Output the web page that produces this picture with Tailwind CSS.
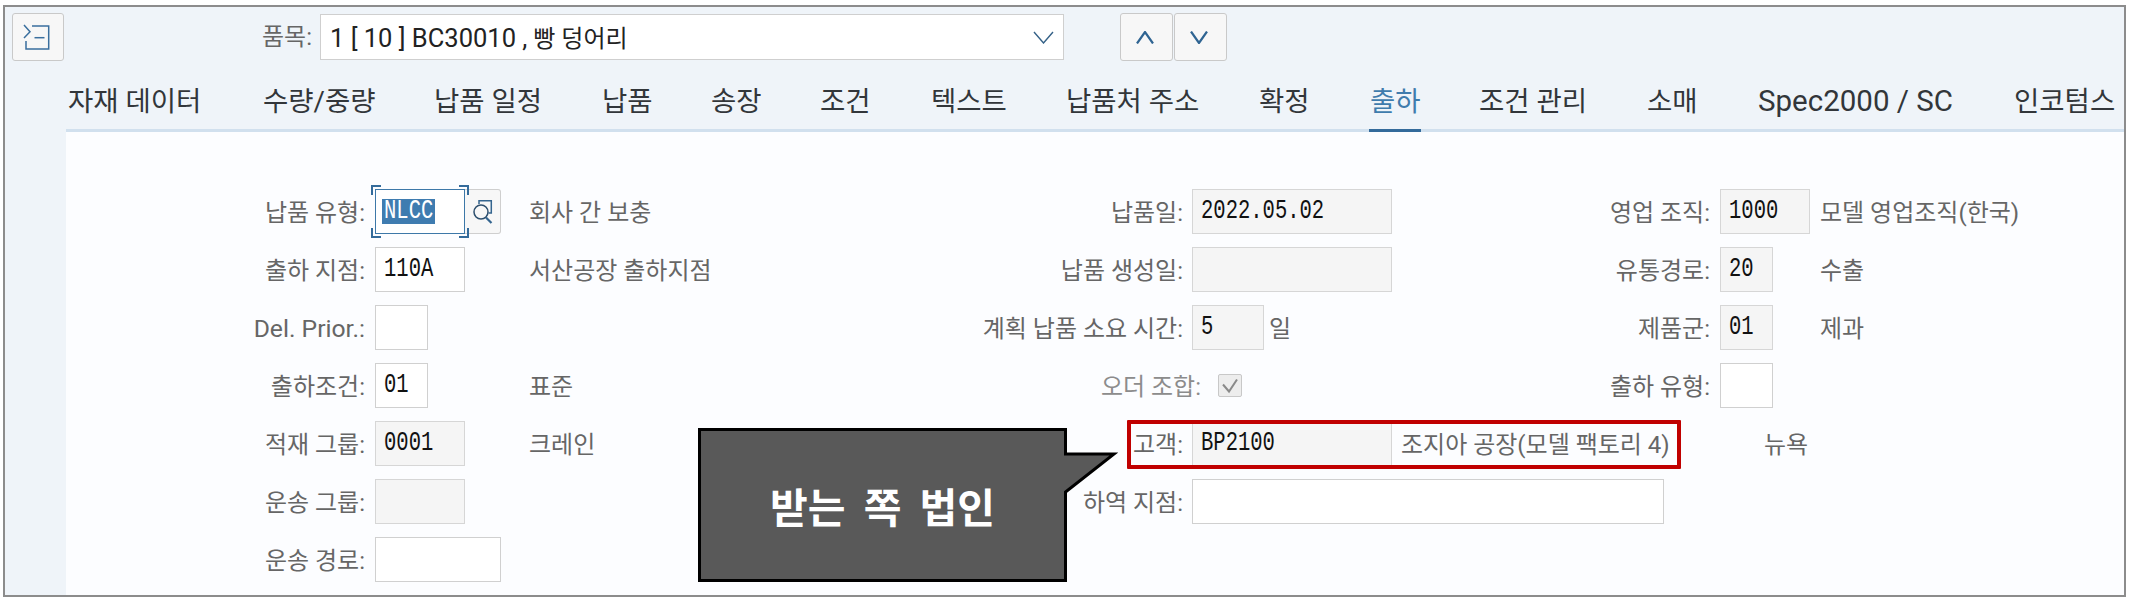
<!DOCTYPE html>
<html lang="ko">
<head>
    <meta charset="UTF-8">
    <script src="https://cdn.jsdelivr.net/npm/@tailwindcss/browser@4"></script>
    <title>출하</title>
</head>
<body class="bg-white font-['Roboto','Noto_Sans_CJK_KR',sans-serif] overflow-hidden">
<div class="pl-[3px] pt-[5px]">
    <div class="relative w-[2123px] h-[592px] border-2 border-[#8c8c8c] bg-[#eff4f9] flex flex-col">

        <!-- top bar -->
        <div class="flex h-[54px] shrink-0 items-start pt-[6px] pl-[7px]">
            <div class="w-[52px] h-[48px] rounded-[3px] border border-[#c9c9c9] bg-[#f7f7f7]">
                <svg viewBox="13 14 50 46" class="w-[50px] h-[46px]" fill="none" stroke="#3a6f9e" stroke-width="1.5">
                    <path d="M24 25 30 31.7 24 38"/>
                    <path d="M32 26H48.7V49H26V41"/>
                    <path d="M34.5 37.7H44.5"/>
                </svg>
            </div>
            <div class="ml-[198px] w-[49px] h-[46px] pt-[2px] flex items-center whitespace-nowrap text-[24px] text-[#666]">품목:</div>
            <div class="ml-[9px] mt-[1px] w-[744px] h-[46px] flex items-center justify-between border border-[#cfcfcf] bg-white pl-[9px] pr-[9px]">
                <span class="pt-[2px] text-[24px] text-[#222] whitespace-nowrap"><span class="text-[25.5px]">1 [ 10 ] BC30010 ,</span> 빵 덩어리</span>
                <svg width="21" height="13" viewBox="0 0 21 13" fill="none" stroke="#346187" stroke-width="1.4"><path d="M1 1 10.5 12 20 1"/></svg>
            </div>
            <div class="ml-[56px] w-[53px] h-[48px] flex items-center justify-center rounded-[3px] border border-[#c9c9c9] bg-[#f7f7f7]">
                <svg class="mr-[3px]" width="18" height="13" viewBox="0 0 18 13" fill="none" stroke="#2f6492" stroke-width="2.2"><path d="M1 12.5 9 1 17 12.5"/></svg>
            </div>
            <div class="ml-[1px] w-[53px] h-[48px] flex items-center justify-center rounded-[3px] border border-[#c9c9c9] bg-[#f7f7f7]">
                <svg class="mr-[4px]" width="18" height="13" viewBox="0 0 18 13" fill="none" stroke="#2f6492" stroke-width="2.2"><path d="M1 .5 9 12 17 .5"/></svg>
            </div>
        </div>

        <!-- tabs -->
        <div class="ml-[61px] h-[71px] shrink-0 flex items-stretch gap-[62px] pl-[2px] border-b-[3px] border-[#d1e0ee] text-[27.5px] text-[#32363a] whitespace-nowrap">
            <div class="w-[133px] pt-[20px]">자재 데이터</div>
            <div class="w-[109px] pt-[20px]">수량/중량</div>
            <div class="w-[106px] pt-[20px]">납품 일정</div>
            <div class="w-[47px] pt-[20px]">납품</div>
            <div class="w-[47px] pt-[20px]">송장</div>
            <div class="w-[49px] pt-[20px]">조건</div>
            <div class="w-[73px] pt-[20px]">텍스트</div>
            <div class="w-[131px] pt-[20px]">납품처 주소</div>
            <div class="w-[49px] pt-[20px]">확정</div>
            <div class="w-[52px] -ml-[1px] -mr-[4px] pl-[1px] pt-[20px] h-[71px] border-b-[3px] border-[#346b9b] text-[#3f7cad]">출하</div>
            <div class="w-[106px] pt-[20px]">조건 관리</div>
            <div class="w-[49px] pt-[20px]">소매</div>
            <div class="w-[194px] pt-[20px] text-[29.5px] leading-[40px]">Spec2000 / SC</div>
            <div class="pt-[20px]">인코텀스</div>
        </div>

        <!-- form -->
        <div class="ml-[61px] flex-1 bg-[#fcfdff] pt-[57px] flex flex-col gap-[13px] text-[24px] text-[#666] whitespace-nowrap">

            <div class="flex h-[45px] items-center">
                <div class="w-[734px] flex items-center">
                    <div class="w-[299px] pt-[3px] text-right">납품 유형:</div>
                    <div class="ml-[10px] w-[154px] flex">
                        <div class="relative w-[90px] h-[45px] flex items-center border border-[#3d78a8] bg-white pl-[6px]">
                            <span class="h-[25px] w-[53px] flex items-center bg-[#3f7cb0] pl-[2px] text-white"><span class="inline-block origin-left scale-x-[.76] font-['Liberation_Mono',monospace] text-[27px]">NLCC</span></span>
                            <span class="absolute -left-[5px] -top-[5px] w-[10px] h-[10px] border-l-2 border-t-2 border-[#346b9b]"></span>
                            <span class="absolute -right-[5px] -top-[5px] w-[10px] h-[10px] border-r-2 border-t-2 border-[#346b9b]"></span>
                            <span class="absolute -left-[5px] -bottom-[5px] w-[10px] h-[10px] border-l-2 border-b-2 border-[#346b9b]"></span>
                            <span class="absolute -right-[5px] -bottom-[5px] w-[10px] h-[10px] border-r-2 border-b-2 border-[#346b9b]"></span>
                        </div>
                        <div class="w-[36px] h-[45px] flex items-center justify-center rounded-r-[3px] border border-l-0 border-[#cfcfcf] bg-[#f7f7f7]">
                            <svg width="20" height="24" viewBox="0 0 20 24" fill="none" stroke="#34658f" stroke-width="1.5">
                                <path d="M6 4V.8H18.3V13H15.5"/>
                                <circle cx="8" cy="12" r="7" stroke="#2d4f6e"/>
                                <path d="M13 17.5 18.5 23" stroke-width="2.2"/>
                            </svg>
                        </div>
                    </div>
                    <div class="pt-[3px]">회사 간 보충</div>
                </div>
                <div class="w-[700px] flex items-center">
                    <div class="w-[383px] pt-[3px] text-right">납품일:</div>
                    <div class="ml-[9px] w-[200px] h-[45px] flex items-center border border-[#d6d6d6] bg-[#f5f5f5] pl-[8px] text-[#111]"><span class="inline-block origin-left scale-x-[.76] font-['Liberation_Mono',monospace] text-[27px]">2022.05.02</span></div>
                </div>
                <div class="flex items-center">
                    <div class="w-[210px] pt-[3px] text-right">영업 조직:</div>
                    <div class="ml-[10px] w-[100px]"><div class="w-[90px] h-[45px] flex items-center border border-[#d6d6d6] bg-[#f5f5f5] pl-[8px] text-[#111]"><span class="inline-block origin-left scale-x-[.76] font-['Liberation_Mono',monospace] text-[27px]">1000</span></div></div>
                    <div class="pt-[3px]">모델 영업조직(한국)</div>
                </div>
            </div>

            <div class="flex h-[45px] items-center">
                <div class="w-[734px] flex items-center">
                    <div class="w-[299px] pt-[3px] text-right">출하 지점:</div>
                    <div class="ml-[10px] w-[154px]"><div class="w-[90px] h-[45px] flex items-center border border-[#d0d0d0] bg-white pl-[8px] text-[#111]"><span class="inline-block origin-left scale-x-[.76] font-['Liberation_Mono',monospace] text-[27px]">110A</span></div></div>
                    <div class="pt-[3px]">서산공장 출하지점</div>
                </div>
                <div class="w-[700px] flex items-center">
                    <div class="w-[383px] pt-[3px] text-right">납품 생성일:</div>
                    <div class="ml-[9px] w-[200px] h-[45px] border border-[#d6d6d6] bg-[#f5f5f5]"></div>
                </div>
                <div class="flex items-center">
                    <div class="w-[210px] pt-[3px] text-right">유통경로:</div>
                    <div class="ml-[10px] w-[100px]"><div class="w-[53px] h-[45px] flex items-center border border-[#d6d6d6] bg-[#f5f5f5] pl-[8px] text-[#111]"><span class="inline-block origin-left scale-x-[.76] font-['Liberation_Mono',monospace] text-[27px]">20</span></div></div>
                    <div class="pt-[3px]">수출</div>
                </div>
            </div>

            <div class="flex h-[45px] items-center">
                <div class="w-[734px] flex items-center">
                    <div class="w-[299px] pt-[3px] text-right text-[24.7px]">Del. Prior.:</div>
                    <div class="ml-[10px] w-[53px] h-[45px] border border-[#d0d0d0] bg-white"></div>
                </div>
                <div class="w-[700px] flex items-center">
                    <div class="w-[383px] pt-[3px] text-right">계획 납품 소요 시간:</div>
                    <div class="ml-[9px] w-[72px] h-[45px] flex items-center border border-[#d6d6d6] bg-[#f5f5f5] pl-[8px] text-[#111]"><span class="inline-block origin-left scale-x-[.76] font-['Liberation_Mono',monospace] text-[27px]">5</span></div>
                    <div class="ml-[5px] pt-[3px]">일</div>
                </div>
                <div class="flex items-center">
                    <div class="w-[210px] pt-[3px] text-right">제품군:</div>
                    <div class="ml-[10px] w-[100px]"><div class="w-[53px] h-[45px] flex items-center border border-[#d6d6d6] bg-[#f5f5f5] pl-[8px] text-[#111]"><span class="inline-block origin-left scale-x-[.76] font-['Liberation_Mono',monospace] text-[27px]">01</span></div></div>
                    <div class="pt-[3px]">제과</div>
                </div>
            </div>

            <div class="flex h-[45px] items-center">
                <div class="w-[734px] flex items-center">
                    <div class="w-[299px] pt-[3px] text-right">출하조건:</div>
                    <div class="ml-[10px] w-[154px]"><div class="w-[53px] h-[45px] flex items-center border border-[#d0d0d0] bg-white pl-[8px] text-[#111]"><span class="inline-block origin-left scale-x-[.76] font-['Liberation_Mono',monospace] text-[27px]">01</span></div></div>
                    <div class="pt-[3px]">표준</div>
                </div>
                <div class="w-[700px] flex items-center">
                    <div class="w-[401px] pt-[3px] text-right text-[#8c8c8c]">오더 조합:</div>
                    <div class="ml-[17px] w-[24px] h-[23px] rounded-[2px] border border-[#c8c8c8] bg-[#ededed]">
                        <svg width="22" height="21" viewBox="0 0 22 21" fill="none" stroke="#8a8a8a" stroke-width="2"><path d="M4 9.5 10 16.5 18 4.5"/></svg>
                    </div>
                </div>
                <div class="flex items-center">
                    <div class="w-[210px] pt-[3px] text-right">출하 유형:</div>
                    <div class="ml-[10px] w-[53px] h-[45px] border border-[#d0d0d0] bg-white"></div>
                </div>
            </div>

            <div class="flex h-[45px] items-center">
                <div class="w-[734px] flex items-center">
                    <div class="w-[299px] pt-[3px] text-right">적재 그룹:</div>
                    <div class="ml-[10px] w-[154px]"><div class="w-[90px] h-[45px] flex items-center border border-[#d6d6d6] bg-[#f5f5f5] pl-[8px] text-[#111]"><span class="inline-block origin-left scale-x-[.76] font-['Liberation_Mono',monospace] text-[27px]">0001</span></div></div>
                    <div class="pt-[3px]">크레인</div>
                </div>
                <div class="w-[964px] flex items-center">
                    <div class="w-[383px] pt-[3px] text-right">고객:</div>
                    <div class="ml-[9px] w-[200px] h-[45px] flex items-center border border-[#d6d6d6] bg-[#f5f5f5] pl-[8px] text-[#111]"><span class="inline-block origin-left scale-x-[.76] font-['Liberation_Mono',monospace] text-[27px]">BP2100</span></div>
                    <div class="ml-[9px] pt-[3px]">조지아 공장(모델 팩토리 4)</div>
                </div>
                <div class="pt-[3px]">뉴욕</div>
            </div>

            <div class="flex h-[45px] items-center">
                <div class="w-[734px] flex items-center">
                    <div class="w-[299px] pt-[3px] text-right">운송 그룹:</div>
                    <div class="ml-[10px] w-[90px] h-[45px] border border-[#d6d6d6] bg-[#f5f5f5]"></div>
                </div>
                <div class="flex items-center">
                    <div class="w-[383px] pt-[3px] text-right">하역 지점:</div>
                    <div class="ml-[9px] w-[472px] h-[45px] border border-[#d0d0d0] bg-white"></div>
                </div>
            </div>

            <div class="flex h-[45px] items-center">
                <div class="w-[299px] pt-[3px] text-right">운송 경로:</div>
                <div class="ml-[10px] w-[126px] h-[45px] border border-[#d0d0d0] bg-white"></div>
            </div>
        </div>

        <!-- annotation: red highlight and callout -->
        <div class="absolute left-[1122px] top-[413px] w-[554px] h-[49px] rounded-[1px] border-[4px] border-[#c00000]"></div>
        <div class="absolute left-[693px] top-[421px] w-[420px] h-[154px]">
            <svg width="420" height="154" viewBox="0 0 420 154" class="absolute left-0 top-0">
                <path d="M1.5 1.5H367.5V26H416L367.5 64V152.5H1.5Z" fill="#595959" stroke="#000" stroke-width="3"/>
            </svg>
            <div class="absolute left-[72px] top-[53px] text-[41px] leading-[56px] font-bold text-white whitespace-nowrap [word-spacing:8px]">받는 쪽 법인</div>
        </div>
    </div>
</div>
</body>
</html>
